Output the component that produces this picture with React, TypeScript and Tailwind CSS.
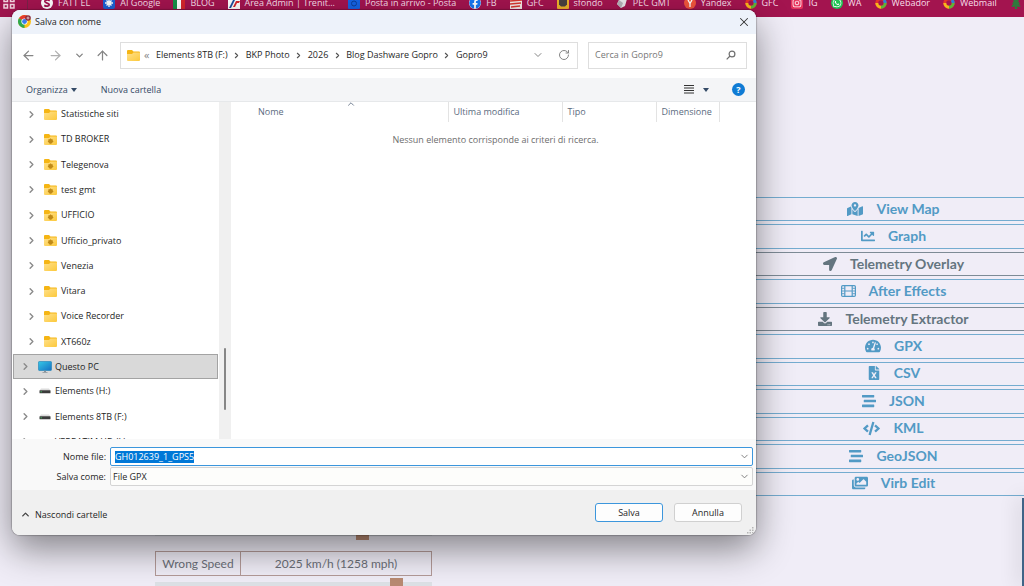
import { useEffect, useRef } from "react";
import type { ReactNode } from "react";
import { ArrowLeft, ArrowRight, ArrowUp, ChevronDown, ChevronRight, ChevronUp, RotateCw, X } from "lucide-react";
import {
  FaChartLine,
  FaCode,
  FaDownload,
  FaFacebook,
  FaFileExcel,
  FaImages,
  FaInstagram,
  FaLocationArrow,
  FaMapMarkedAlt,
  FaStream,
  FaTachometerAlt,
  FaTree,
  FaWhatsapp,
} from "react-icons/fa";

function FilmIcon() {
  return (
    <svg viewBox="0 0 15 12" className="h-3 w-[15px]" fill="none" stroke="currentColor">
      <rect x=".6" y=".6" width="13.800" height="10.800" rx="1.200" strokeWidth="1.200" />
      <path d="M3.800.6v10.800M11.200.6v10.800M3.800 6h7.400" strokeWidth="1.200" />
      <path d="M1 3.300h2.600M1 6h2.600M1 8.700h2.600M11.400 3.300H14M11.400 6H14M11.400 8.700H14" strokeWidth=".9" />
    </svg>
  );
}

type Action = { label: string; icon: ReactNode; muted?: boolean };

const actions: Action[] = [
  { label: "View Map", icon: <FaMapMarkedAlt size={16} /> },
  { label: "Graph", icon: <FaChartLine size={14} /> },
  { label: "Telemetry Overlay", icon: <FaLocationArrow size={14} />, muted: true },
  { label: "After Effects", icon: <FilmIcon /> },
  { label: "Telemetry Extractor", icon: <FaDownload size={14} />, muted: true },
  { label: "GPX", icon: <FaTachometerAlt size={16} /> },
  { label: "CSV", icon: <FaFileExcel size={14} /> },
  { label: "JSON", icon: <FaStream size={14} /> },
  { label: "KML", icon: <FaCode size={17} /> },
  { label: "GeoJSON", icon: <FaStream size={14} /> },
  { label: "Virb Edit", icon: <FaImages size={16} /> },
];

function Wheel() {
  return (
    <svg viewBox="0 0 12 12" className="size-3">
      <circle cx="6" cy="6" r="4.200" fill="none" stroke="#e5342b" strokeWidth="3" />
      <path d="M10.200 6A4.200 4.200 0 0 1 6 10.200" fill="none" stroke="#5fb336" strokeWidth="3" />
      <path d="M6 10.200A4.200 4.200 0 0 1 1.800 6" fill="none" stroke="#f5b81c" strokeWidth="3" />
      <path d="M10.200 6A4.200 4.200 0 0 0 8.800 2.900" fill="none" stroke="#2f7fd3" strokeWidth="3" />
    </svg>
  );
}

const bookmarks: { label: string; icon: ReactNode }[] = [
  {
    label: "FATT EL",
    icon: (
      <svg viewBox="0 0 12 12" className="size-3">
        <circle cx="6" cy="6" r="6" fill="#fff" />
        <path d="M8.800 3.600C6 2 3.600 3.400 4 4.800c.5 1.600 4.200 1 4.200 2.900 0 1.400-2.600 2.100-5 .7" stroke="#a3144f" strokeWidth="1.800" fill="none" />
      </svg>
    ),
  },
  {
    label: "AI Google",
    icon: (
      <svg viewBox="0 0 12 12" className="size-3">
        <rect width="12" height="12" rx="2" fill="#1c62d6" />
        <path d="M6 2v8M2 6h8M3.500 3.500l5 5M8.500 3.500l-5 5" stroke="#fff" strokeWidth="1.400" />
      </svg>
    ),
  },
  {
    label: "BLOG",
    icon: (
      <svg viewBox="0 0 12 12" className="size-3">
        <rect width="12" height="12" rx="2" fill="#fff" />
        <rect width="4" height="12" fill="#159148" />
        <rect x="8" width="4" height="12" fill="#d6262e" />
      </svg>
    ),
  },
  {
    label: "Area Admin | Trenit...",
    icon: (
      <svg viewBox="0 0 12 12" className="size-3">
        <rect width="12" height="12" fill="#fff" />
        <path d="M1 11L5 3h2L3 11z" fill="#1c4fa0" />
        <path d="M5 10L8 4h4l-1 2H9l-2 4z" fill="#d6262e" />
      </svg>
    ),
  },
  {
    label: "Posta in arrivo - Posta",
    icon: (
      <svg viewBox="0 0 12 12" className="size-3">
        <rect width="12" height="12" rx="1" fill="#1663e6" />
        <circle cx="6" cy="6.500" r="2.500" fill="none" stroke="#0a3f9c" />
      </svg>
    ),
  },
  { label: "FB", icon: <FaFacebook className="size-3 rounded-full bg-white text-[#1877f2]" /> },
  {
    label: "GFC",
    icon: (
      <svg viewBox="0 0 12 12" className="size-3">
        <rect width="12" height="12" fill="#f6e9e6" />
        <path d="M0 4l12-1M0 7l11-1M1 10l9-1" stroke="#d8392f" strokeWidth="1.500" />
      </svg>
    ),
  },
  {
    label: "sfondo",
    icon: (
      <svg viewBox="0 0 12 12" className="size-3">
        <rect width="12" height="12" rx="1" fill="#f0b32a" />
        <path d="M2 3h8v4.500L8 9.500H4L2 7.500z" fill="#4a4140" />
      </svg>
    ),
  },
  {
    label: "PEC GMT",
    icon: (
      <svg viewBox="0 0 12 12" className="size-3">
        <path d="M3 3l8-1-2 7-4 2-4-4z" fill="#e9e6ea" />
        <path d="M3 3l4 3-2 5-4-4z" fill="#b5b1b8" />
      </svg>
    ),
  },
  {
    label: "Yandex",
    icon: (
      <svg viewBox="0 0 12 12" className="size-3">
        <circle cx="6" cy="6" r="6" fill="#f2553d" />
        <path d="M4 3l2 3.500L8 3M6 6.500V10" stroke="#fff" strokeWidth="1.300" fill="none" />
      </svg>
    ),
  },
  { label: "GFC", icon: <Wheel /> },
  { label: "IG", icon: <FaInstagram className="size-3 rounded-xs bg-[#e6335c] p-px text-white" /> },
  { label: "WA", icon: <FaWhatsapp className="size-3 rounded-full bg-[#1fc454] p-px text-white" /> },
  { label: "Webador", icon: <Wheel /> },
  { label: "Webmail", icon: <Wheel /> },
];

function BookmarksBar() {
  return (
    <header className="h-[17px] shrink-0 overflow-hidden bg-[#a3144f]">
      <nav aria-label="Bookmarks" className="-mt-[5px] flex h-4 items-center gap-[13px] pl-[3px] font-['Open_Sans',sans-serif] text-[9px] leading-4 text-[#f7dfe9]">
        <div className="flex shrink-0 items-center gap-3">
          <svg viewBox="0 0 12 12" className="size-3" fill="none" stroke="#f3d3df" strokeWidth="1.500">
            <path d="M1 1h3.500v3.500H1zM7.500 1H11v3.500H7.500zM1 7.500h3.500V11H1zM7.500 7.500H11V11H7.500z" />
          </svg>
          <span className="h-3 w-px bg-[#7b2248]" />
        </div>
        {bookmarks.map((b, i) => (
          <a key={i} href="#" className="flex shrink-0 items-center gap-[5px] whitespace-nowrap">
            {b.icon}
            {b.label}
          </a>
        ))}
        <FaTree className="size-3 shrink-0 text-[#2f7a3c]" />
      </nav>
    </header>
  );
}

function Slider({ label, value }: { label: string; value: number }) {
  return (
    <input
      type="range"
      aria-label={label}
      defaultValue={value}
      className="block h-5 w-full appearance-none bg-transparent [&::-webkit-slider-runnable-track]:h-3 [&::-webkit-slider-runnable-track]:bg-[#dde1e6] [&::-webkit-slider-thumb]:-mt-1 [&::-webkit-slider-thumb]:h-5 [&::-webkit-slider-thumb]:w-[13px] [&::-webkit-slider-thumb]:appearance-none [&::-webkit-slider-thumb]:bg-[#b98a72]"
    />
  );
}

function FolderIcon({ synced }: { synced?: boolean }) {
  return (
    <svg viewBox="0 0 13 11" className="h-[11px] w-[13px] shrink-0">
      <defs>
        <linearGradient id="folder" x1="0" y1="0" x2="1" y2="1">
          <stop offset="0" stopColor="#ffe08a" />
          <stop offset="1" stopColor="#fcc93c" />
        </linearGradient>
      </defs>
      <path d="M0 1a1 1 0 0 1 1-1h4l1.500 1.500H12a1 1 0 0 1 1 1V9H0z" fill="#f5b514" />
      <path d="M0 4h5l1.500-1.500H13V10a1 1 0 0 1-1 1H1a1 1 0 0 1-1-1z" fill="url(#folder)" />
      {synced && <path d="M6.500 4.300l1 1h1.200v1.200l.8.900-2.300 2.400h-1.400L3.700 7.400l.7-.9V5.300h1.200z" fill="#c08a17" />}
    </svg>
  );
}

function MonitorIcon() {
  return (
    <svg viewBox="0 0 14 12" className="h-3 w-3.5 shrink-0">
      <defs>
        <linearGradient id="screen" x1="0" y1="0" x2="1" y2="1">
          <stop offset="0" stopColor="#35c8e6" />
          <stop offset="1" stopColor="#1470c4" />
        </linearGradient>
      </defs>
      <rect x=".5" y=".5" width="13" height="9" rx=".8" fill="url(#screen)" stroke="#1d7fb5" strokeWidth=".6" />
      <path d="M6 9.800h2v1.200H6zM4.500 11h5v.8h-5z" fill="#8a9299" />
    </svg>
  );
}

function DriveIcon() {
  return (
    <svg viewBox="0 0 14 12" className="h-3 w-3.5 shrink-0">
      <path d="M3 3.500h8l1.500 2h-11z" fill="#dcdcdc" />
      <rect x="1.500" y="5.300" width="11" height="3" rx=".5" fill="#3b3b3b" />
      <rect x="2.500" y="6.300" width="1.500" height="1" fill="#3fae5a" />
    </svg>
  );
}

function SearchIcon() {
  return (
    <svg viewBox="0 0 10 10" className="size-2.5" fill="none" stroke="#6f6f6f" strokeWidth="1.200">
      <circle cx="6" cy="4" r="2.900" />
      <path d="M4 6L.7 9.300" />
    </svg>
  );
}

type Node = { label: string; kind: "folder" | "synced" | "pc" | "drive" };

const nodes: Node[] = [
  { label: "Statistiche siti", kind: "folder" },
  { label: "TD BROKER", kind: "synced" },
  { label: "Telegenova", kind: "synced" },
  { label: "test gmt", kind: "synced" },
  { label: "UFFICIO", kind: "synced" },
  { label: "Ufficio_privato", kind: "synced" },
  { label: "Venezia", kind: "folder" },
  { label: "Vitara", kind: "folder" },
  { label: "Voice Recorder", kind: "folder" },
  { label: "XT660z", kind: "folder" },
  { label: "Questo PC", kind: "pc" },
  { label: "Elements (H:)", kind: "drive" },
  { label: "Elements 8TB (F:)", kind: "drive" },
  { label: "VERBATIM HD (I:)", kind: "drive" },
];

function Tree() {
  return (
    <div className="flex w-[219px] shrink-0 overflow-hidden">
      <ul className="-mt-px grid h-[354px] flex-1 auto-rows-fr pl-px">
        {nodes.map((n) => {
          const nested = n.kind === "folder" || n.kind === "synced";
          return (
            <li
              key={n.label}
              className={`mr-px flex items-center border pr-1 ${nested ? "pl-3" : "pl-1.5"} ${
                n.kind === "drive" ? "pb-px" : "pt-px"
              } ${n.kind === "pc" ? "border-[#a3a3a3] bg-[#d9d9d9]" : "border-transparent"}`}
            >
              <button type="button" aria-label={`Espandi ${n.label}`} className="mr-[7px] text-[#8a8a8a]">
                <ChevronRight size={11} strokeWidth={3} />
              </button>
              {n.kind === "pc" ? <MonitorIcon /> : n.kind === "drive" ? <DriveIcon /> : <FolderIcon synced={n.kind === "synced"} />}
              <span className={`whitespace-nowrap ${nested ? "ml-1" : "ml-[3px]"}`}>{n.label}</span>
            </li>
          );
        })}
      </ul>
      <div className="flex w-3 justify-center bg-[#f0f0f0] pt-[246px]">
        <span className="h-[62px] w-0.5 rounded-full bg-[#868686]" />
      </div>
    </div>
  );
}

function FileList() {
  return (
    <div className="min-w-0 flex-1 pl-1">
      <table className="w-full table-fixed text-left text-[#5b6b80]">
        <colgroup>
          <col />
          <col className="w-[114px]" />
          <col className="w-[94px]" />
          <col className="w-[63px]" />
          <col className="w-[37px]" />
        </colgroup>
        <thead>
          <tr className="h-5">
            <th scope="col" aria-sort="ascending" className="relative border-r border-[#e3e3e3] pl-[23px] font-normal">
              Nome
              <ChevronUp size={10} className="absolute top-[-3px] left-[111px]" />
            </th>
            <th scope="col" className="border-r border-[#e3e3e3] pl-[5px] font-normal">Ultima modifica</th>
            <th scope="col" className="border-r border-[#e3e3e3] pl-[5px] font-normal">Tipo</th>
            <th scope="col" className="border-r border-[#e3e3e3] pl-[5px] font-normal">Dimensione</th>
            <td />
          </tr>
        </thead>
        <tbody>
          <tr>
            <td colSpan={5} className="pt-3 text-center text-[#6d6d6d]">
              Nessun elemento corrisponde ai criteri di ricerca.
            </td>
          </tr>
        </tbody>
      </table>
    </div>
  );
}

const crumbs = ["Elements 8TB (F:)", "BKP Photo", "2026", "Blog Dashware Gopro", "Gopro9"];

function NavigationRow() {
  return (
    <div className="flex h-11 items-center bg-white pr-[9px] pb-0.5 pl-2 text-[#858585]">
      <div className="flex items-center gap-2.5">
        <button type="button" aria-label="Indietro" className="px-px"><ArrowLeft size={15} /></button>
        <button type="button" aria-label="Avanti" className="px-px text-[#b0b0b0]"><ArrowRight size={15} /></button>
        <button type="button" aria-label="Percorsi recenti"><ChevronDown size={11} strokeWidth={3} /></button>
        <button type="button" aria-label="Su"><ArrowUp size={15} /></button>
      </div>
      <div className="ml-2.5 flex h-[27px] flex-1 items-center border border-[#dedede] pr-[7px] pl-1.5">
        <FolderIcon />
        <span className="ml-1 w-3 text-[11px]">«</span>
        <ol className="flex items-center text-[#1f1f1f]">
          {crumbs.map((c, i) => (
            <li key={c} className="flex items-center whitespace-nowrap">
              {i > 0 && (
                <span className="flex w-[18px] justify-center text-[#555]">
                  <ChevronRight size={9} strokeWidth={3} />
                </span>
              )}
              <a href="#">{c}</a>
            </li>
          ))}
        </ol>
        <button type="button" aria-label="Cronologia" className="mr-3.5 ml-auto"><ChevronDown size={12} /></button>
        <button type="button" aria-label="Aggiorna"><RotateCw size={12} /></button>
      </div>
      <label className="ml-2.5 flex h-[27px] w-[159px] items-center border border-[#dedede] pr-2.5 pl-1.5">
        <input type="search" aria-label="Cerca in Gopro9" placeholder="Cerca in Gopro9" className="min-w-0 flex-1 outline-none placeholder:text-[#777]" />
        <SearchIcon />
      </label>
    </div>
  );
}

function ChromeIcon() {
  return (
    <svg viewBox="0 0 13 13" className="size-[13px]">
      <circle cx="6.500" cy="6.500" r="6.500" fill="#fbc116" />
      <path d="M6.500 6.500L.9 3.250A6.500 6.500 0 0 1 12.100 3.250z" fill="#e33b2e" />
      <path d="M6.500 6.500L.9 3.250A6.500 6.500 0 0 0 6.500 13z" fill="#2da94f" />
      <circle cx="6.500" cy="6.500" r="3.100" fill="#fff" />
      <circle cx="6.500" cy="6.500" r="2.400" fill="#3b7ded" />
      <circle cx="10" cy="3" r="2.800" fill="#8a2a3a" />
      <path d="M8.500 3h3M10 1.500v3" stroke="#f0d9dc" strokeWidth=".8" />
    </svg>
  );
}

function SaveDialog() {
  const nameRef = useRef<HTMLInputElement>(null);
  useEffect(() => {
    nameRef.current?.focus();
    nameRef.current?.select();
  }, []);

  return (
    <section
      role="dialog"
      aria-labelledby="dialog-title"
      className="absolute top-2.5 right-[268px] left-3 overflow-hidden rounded-lg bg-white font-['Open_Sans',sans-serif] text-[9px] leading-3 text-[#1f1f1f] shadow-[0_0_1px_1px_rgba(0,0,0,0.2),0_14px_36px_rgba(0,0,0,0.45)]"
    >
      <div className="flex h-6 items-center bg-[#edf2fa] pr-[5px] pb-px pl-1.5">
        <ChromeIcon />
        <h1 id="dialog-title" className="ml-1">Salva con nome</h1>
        <button type="button" aria-label="Chiudi" className="ml-auto text-[#333]"><X size={14} strokeWidth={1.75} /></button>
      </div>

      <NavigationRow />

      <div className="flex h-6 items-center border-b border-[#e6e8ea] bg-[#f4f5f7] pr-[11px] pl-3.5 text-[#344a66]">
        <button type="button" className="flex items-center gap-[3px]">
          Organizza
          <svg viewBox="0 0 6 4" className="h-1 w-1.5"><path d="M0 0h6L3 4z" fill="currentColor" /></svg>
        </button>
        <button type="button" className="ml-6">Nuova cartella</button>
        <button type="button" aria-label="Cambia visualizzazione" className="mr-[23px] ml-auto flex items-center gap-[9px]">
          <svg viewBox="0 0 10 9" className="h-[9px] w-2.5"><path d="M0 .5h10M0 3h10M0 5.500h10M0 8h10" stroke="#333" /></svg>
          <svg viewBox="0 0 6 4" className="h-1 w-1.5"><path d="M0 0h6L3 4z" fill="currentColor" /></svg>
        </button>
        <button type="button" aria-label="Guida" className="size-[13px] rounded-full bg-[#0f7bd4] font-bold text-white">?</button>
      </div>

      <div className="flex h-[337px]">
        <Tree />
        <FileList />
      </div>

      <div className="grid grid-cols-[94px_1fr] items-center gap-x-1 gap-y-px bg-[#f9f9f9] pt-2 pr-[3px] pb-1">
        <label htmlFor="file-name" className="text-right">Nome file:</label>
        <div className="flex h-[19px] items-center rounded-xs border border-[#3c96dc] bg-white pr-0.5 pl-1">
          <input
            id="file-name"
            ref={nameRef}
            defaultValue="GH012639_1_GPS5"
            className="min-w-0 flex-1 outline-none selection:bg-[#0078d7] selection:text-white"
          />
          <button type="button" aria-label="Nomi recenti" className="text-[#777]"><ChevronDown size={11} /></button>
        </div>
        <label htmlFor="file-type" className="text-right">Salva come:</label>
        <div className="flex h-[19px] items-center rounded-xs border border-[#d4d4d4] bg-[#fdfdfb] pr-0.5 pl-0.5">
          <select id="file-type" className="min-w-0 flex-1 appearance-none outline-none">
            <option>File GPX</option>
          </select>
          <ChevronDown size={11} className="pointer-events-none text-[#777]" />
        </div>
      </div>

      <div className="relative flex h-[45px] items-center gap-[11px] bg-[#f0f0f0] pr-3.5 pl-2">
        <button type="button" className="mr-auto flex items-center gap-1 pt-1">
          <ChevronUp size={11} strokeWidth={3} className="text-[#444]" />
          Nascondi cartelle
        </button>
        <button type="button" className="h-[19px] w-[68px] rounded-[3px] border border-[#3c96dc] bg-[#fdfdfd]">Salva</button>
        <button type="button" className="h-[19px] w-[68px] rounded-[3px] border border-[#d0d0d0] bg-[#fdfdfd]">Annulla</button>
        <svg viewBox="0 0 7 7" className="absolute right-0.5 bottom-px size-[7px]" fill="#b5b5b5">
          <path d="M5 0h1.500v1.500H5zM2.500 2.500H4V4H2.500zM5 2.500h1.500V4H5zM0 5h1.500v1.500H0zM2.500 5H4v1.500H2.500zM5 5h1.500v1.500H5z" />
        </svg>
      </div>
    </section>
  );
}

export default function App() {
  return (
    <div className="relative flex h-screen flex-col overflow-hidden bg-[#f0edf7]">
      <BookmarksBar />
      <main className="flex min-h-0 flex-1 justify-between font-[Lato,sans-serif]">
        <section className="ml-[155px] w-[277px] pt-[503px]">
          <Slider label="Previous filter" value={76} />
          <div className="mt-[11px] flex h-[25px] border border-[#b39a98] text-[12px] leading-[23px] text-[#6b6f78]">
            <span className="w-[85px] border-r border-[#b39a98] text-center">Wrong Speed</span>
            <span className="flex-1 text-center">2025 km/h (1258 mph)</span>
          </div>
          <div className="mt-0.5">
            <Slider label="Wrong Speed" value={89} />
          </div>
        </section>
        <aside className="w-[272px] pt-[180px]">
          <div className="grid h-[299px] auto-rows-fr gap-[3px]">
            {actions.map((a) => (
              <button
                key={a.label}
                type="button"
                className={`flex items-center justify-center gap-[13px] border-y pb-px pl-[11px] text-[14px] leading-5 font-bold ${
                  a.muted ? "border-[#7d8b96] text-[#64757f]" : "border-[#74acd0] text-[#529ac5]"
                }`}
              >
                {a.icon}
                {a.label}
              </button>
            ))}
          </div>
        </aside>
      </main>
      <SaveDialog />
      <div className="absolute right-0 bottom-0 h-[88px] w-0.5 bg-[#3f6487] shadow-[0_0_20px_2px_rgba(0,0,0,0.2)]" />
    </div>
  );
}
